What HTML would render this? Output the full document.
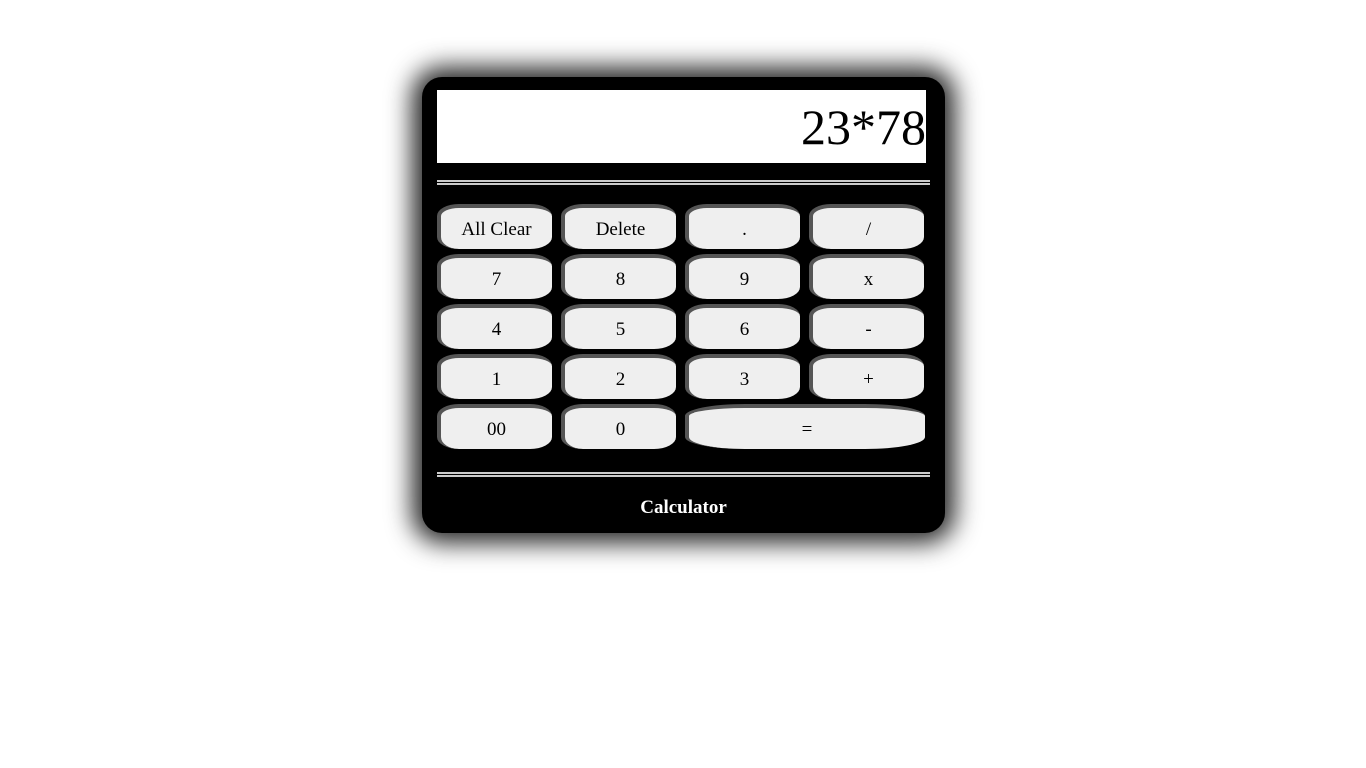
<!DOCTYPE html>
<html><head><style>
body{margin:0;background:#fff;width:1366px;height:768px;position:relative;font-family:"Liberation Serif",serif;}
.calc{position:absolute;left:422px;top:77px;width:523px;height:456px;background:#000;border-radius:20px;box-shadow:0 0 25px 10px rgba(0,0,0,0.85);}
.disp{position:absolute;left:15px;top:13px;width:489px;height:73px;background:#fff;text-align:right;font-size:50px;line-height:75px;color:#000;}
.hr{position:absolute;left:15px;width:493px;height:1px;border-top:2px solid #ccc;border-bottom:2px solid #ccc;}
.b{position:absolute;width:111px;height:41px;background:#efefef;border-top:4px solid #555;border-left:4px solid #555;border-radius:22px/12px;font-size:19px;line-height:43px;text-align:center;color:#000;box-sizing:content-box;}
.t{position:absolute;left:0;width:523px;top:420px;text-align:center;color:#fff;font-weight:bold;font-size:19px;}
</style></head><body>
<div class="calc">
<div class="disp">23*78</div>
<div class="hr" style="top:103px"></div>
<div class="b" style="left:15px;top:127px">All Clear</div>
<div class="b" style="left:139px;top:127px">Delete</div>
<div class="b" style="left:263px;top:127px">.</div>
<div class="b" style="left:387px;top:127px">/</div>
<div class="b" style="left:15px;top:177px">7</div>
<div class="b" style="left:139px;top:177px">8</div>
<div class="b" style="left:263px;top:177px">9</div>
<div class="b" style="left:387px;top:177px">x</div>
<div class="b" style="left:15px;top:227px">4</div>
<div class="b" style="left:139px;top:227px">5</div>
<div class="b" style="left:263px;top:227px">6</div>
<div class="b" style="left:387px;top:227px">-</div>
<div class="b" style="left:15px;top:277px">1</div>
<div class="b" style="left:139px;top:277px">2</div>
<div class="b" style="left:263px;top:277px">3</div>
<div class="b" style="left:387px;top:277px">+</div>
<div class="b" style="left:15px;top:327px">00</div>
<div class="b" style="left:139px;top:327px">0</div>
<div class="b" style="left:263px;top:327px;width:236px;border-radius:60px/12px">=</div>
<div class="hr" style="top:395px"></div>
<div class="t">Calculator</div>
</div>
</body></html>
